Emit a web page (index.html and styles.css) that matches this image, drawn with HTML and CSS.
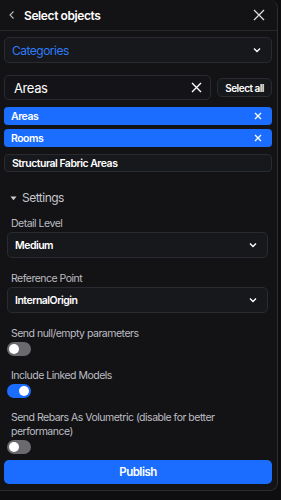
FILE: index.html
```html
<!DOCTYPE html>
<html>
<head>
    <meta charset="utf-8" />
    <title>Select objects</title>
    <link rel="stylesheet" href="styles.css">
</head>
<body>
    <div class="panel">
        <div class="header">
            <svg class="back" width="10" height="10" viewBox="0 0 10 10"><path d="M6.5 1.5 L3 5 L6.5 8.5" fill="none" stroke="#bbb" stroke-width="1.1"/></svg>
            <span class="title">Select objects</span>
            <svg class="close" width="12" height="12" viewBox="0 0 12 12"><path d="M1 1 L11 11 M11 1 L1 11" fill="none" stroke="#ddd" stroke-width="1.3"/></svg>
        </div>

        <div class="body">
            <div class="field categories">
                <span>Categories</span>
                <svg class="chev" width="8" height="6" viewBox="0 0 8 6"><path d="M1 1.5 L4 4.5 L7 1.5" fill="none" stroke="#fff" stroke-width="1.4"/></svg>
            </div>

            <div class="search-row">
                <div class="field search">
                    <span>Areas</span>
                    <svg width="11" height="11" viewBox="0 0 11 11"><path d="M1 1 L10 10 M10 1 L1 10" fill="none" stroke="#fff" stroke-width="1.4"/></svg>
                </div>
                <div class="select-all">Select all</div>
            </div>

            <div class="chips">
                <div class="chip on">
                    <span>Areas</span>
                    <svg width="8" height="8" viewBox="0 0 8 8"><path d="M1 1 L7 7 M7 1 L1 7" fill="none" stroke="#fff" stroke-width="1.3"/></svg>
                </div>
                <div class="chip on">
                    <span>Rooms</span>
                    <svg width="8" height="8" viewBox="0 0 8 8"><path d="M1 1 L7 7 M7 1 L1 7" fill="none" stroke="#fff" stroke-width="1.3"/></svg>
                </div>
                <div class="chip off">
                    <span>Structural Fabric Areas</span>
                </div>
            </div>

            <div class="settings">
                <div class="settings-head">
                    <svg width="7" height="5" viewBox="0 0 7 5"><path d="M0.5 0.5 L6.5 0.5 L3.5 4.2 Z" fill="#ccc"/></svg>
                    <span>Settings</span>
                </div>

                <div class="label">Detail Level</div>
                <div class="field select">
                    <span>Medium</span>
                    <svg class="chev" width="8" height="6" viewBox="0 0 8 6"><path d="M1 1.5 L4 4.5 L7 1.5" fill="none" stroke="#fff" stroke-width="1.4"/></svg>
                </div>

                <div class="label">Reference Point</div>
                <div class="field select">
                    <span>InternalOrigin</span>
                    <svg class="chev" width="8" height="6" viewBox="0 0 8 6"><path d="M1 1.5 L4 4.5 L7 1.5" fill="none" stroke="#fff" stroke-width="1.4"/></svg>
                </div>

                <div class="label">Send null/empty parameters</div>
                <div class="toggle"><div class="knob"></div></div>

                <div class="label">Include Linked Models</div>
                <div class="toggle checked"><div class="knob"></div></div>

                <div class="label">Send Rebars As Volumetric (disable for better performance)</div>
                <div class="toggle"><div class="knob"></div></div>
            </div>

            <div class="publish">Publish</div>
        </div>
    </div>
</body>
</html>
```

FILE: styles.css
```css
body {
    margin: 0;
    padding: 0;
    background: #0e0e10;
    font-family: Inter, "Noto Sans", sans-serif;
    color: #fff;
}

.panel {
    width: 278px;
    height: 491px;
    box-sizing: border-box;
    background: #131316;
    border-right: 1px solid #2c2c31;
    border-bottom: 1px solid #2c2c31;
    border-radius: 0 8px 8px 0;
}

.header {
    height: 31px;
    box-sizing: border-box;
    border-bottom: 1px solid #26262b;
    display: flex;
    align-items: center;
    padding: 0 12px 0 7px;
}
.header .title {
    font-size: 12px;
    font-weight: 600;
    letter-spacing: -0.4px;
    margin-left: 7px;
    flex: 1;
}

.body {
    padding: 6px 5px 0 4px;
}

.field {
    display: flex;
    align-items: center;
    justify-content: space-between;
    background: #17181c;
    border: 1px solid #2a2b31;
    border-radius: 5px;
    box-sizing: border-box;
}

.categories {
    height: 26px;
    padding: 0 10px 0 7px;
    color: #2f7cf6;
    font-size: 12px;
    letter-spacing: -0.5px;
}

.search-row {
    display: flex;
    align-items: center;
    gap: 6px;
    margin-top: 12px;
}
.search {
    flex: 1;
    height: 25px;
    padding: 0 8px 0 9px;
    font-size: 13px;
    letter-spacing: -0.4px;
    background: #141418;
}
.select-all {
    height: 19px;
    box-sizing: border-box;
    padding: 0 7px;
    display: flex;
    align-items: center;
    font-size: 10px;
    font-weight: 600;
    letter-spacing: -0.5px;
    border: 1px solid #2a2b31;
    border-radius: 5px;
    background: #17181c;
}

.chips {
    display: flex;
    flex-direction: column;
    gap: 4px;
    margin-top: 7px;
}
.chip {
    height: 18px;
    box-sizing: border-box;
    border-radius: 4px;
    padding: 0 10px 0 7px;
    display: flex;
    align-items: center;
    justify-content: space-between;
    font-size: 10.5px;
    font-weight: 600;
    letter-spacing: -0.5px;
}
.chip.on {
    background: #1a6dfe;
}
.chip.off {
    background: #17181c;
    border: 1px solid #2a2b31;
    margin-top: 3px;
}

.settings {
    padding: 0 4px 0 3px;
}
.settings-head {
    display: flex;
    align-items: center;
    gap: 5px;
    margin-top: 18px;
    padding-left: 3px;
    line-height: 16px;
    color: #c6c6ca;
    font-size: 12px;
    letter-spacing: -0.5px;
}
.label {
    color: #bdbdc2;
    font-size: 10.5px;
    letter-spacing: -0.5px;
    padding-left: 4px;
    margin-top: 11px;
    line-height: 14px;
}
.select {
    height: 26px;
    margin-top: 1px;
    padding: 0 10px 0 7px;
    font-size: 10.5px;
    font-weight: 600;
    letter-spacing: -0.5px;
}
.select + .label {
    margin-top: 14px;
}

.toggle {
    width: 24px;
    height: 14px;
    border-radius: 7px;
    background: #6a6a6e;
    margin-top: 1px;
    display: flex;
    align-items: center;
    padding: 0 2px;
    box-sizing: border-box;
}
.toggle .knob {
    width: 10px;
    height: 10px;
    border-radius: 50%;
    background: #fff;
}
.toggle.checked {
    background: #1a6dfe;
    justify-content: flex-end;
}
.toggle + .label {
    margin-top: 13px;
}

.publish {
    margin-top: 6px;
    height: 24px;
    border-radius: 5px;
    background: #1a6dfe;
    display: flex;
    align-items: center;
    justify-content: center;
    font-size: 11.5px;
    font-weight: 600;
    letter-spacing: -0.5px;
}
```
